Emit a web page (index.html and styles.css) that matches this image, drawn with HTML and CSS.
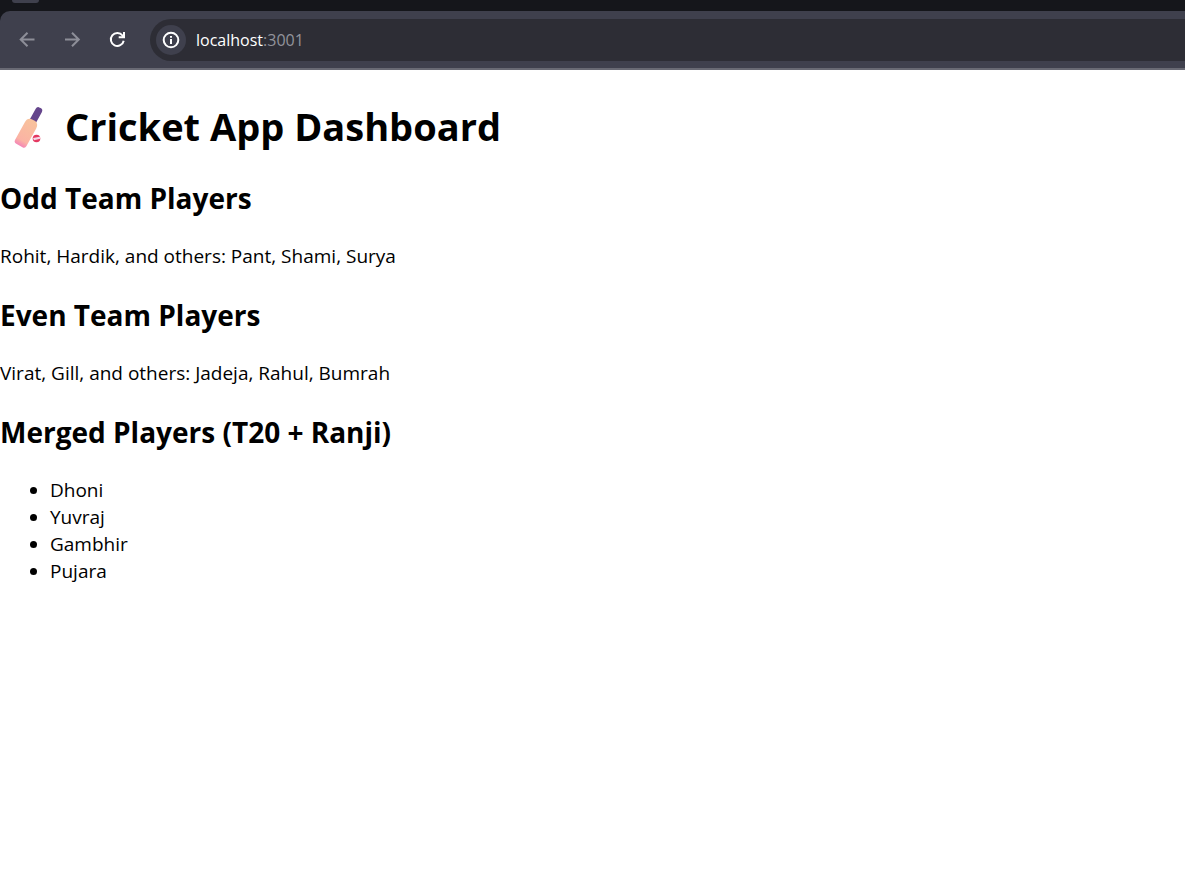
FILE: index.html
```html
<!DOCTYPE html>
<html lang="en">
<head>
  <meta charset="utf-8">
  <title>Cricket App Dashboard</title>
  <link rel="stylesheet" href="styles.css">
</head>
<body>
  <header class="browser">
    <div class="tab-strip"><div class="tab-edge"></div></div>
    <div class="toolbar">
      <nav class="nav-buttons" aria-label="Browser">
        <button class="nav-button nav-button-muted" type="button" aria-label="Back">
          <svg width="16" height="16" viewBox="0 0 16 16"><path d="M15.500 7.500H2M8.500 0.700L1.700 7.500L8.500 14.300"/></svg>
        </button>
        <button class="nav-button nav-button-muted" type="button" aria-label="Forward">
          <svg width="16" height="16" viewBox="0 0 16 16"><path d="M1 7.500H14.500M8 0.700L14.800 7.500L8 14.300"/></svg>
        </button>
        <button class="nav-button" type="button" aria-label="Reload">
          <svg width="16" height="16" viewBox="0 0 16 16"><path d="M14.700 8.700A6.500 6.500 0 1 1 13.500 3.500L14.500 4.700M15 0V5.200H9.700"/></svg>
        </button>
      </nav>
      <div class="address">
        <button class="site-info" type="button" aria-label="Site information">
          <svg width="18" height="18" viewBox="0 0 18 18"><circle cx="9" cy="9" r="7.300"/><path d="M9 8V13M9 5V6.800"/></svg>
        </button>
        <span class="url">localhost<span class="port">:3001</span></span>
      </div>
    </div>
  </header>
  <main class="page">
    <h1 class="title">
      <svg class="bat" width="53" height="53" viewBox="0 0 53 53" role="img" aria-label="Cricket bat and ball">
        <defs>
          <linearGradient id="blade" x1="0" y1="0" x2="0" y2="1">
            <stop offset="0" stop-color="#f8c39c"/>
            <stop offset="0.800" stop-color="#fbb3a4"/>
            <stop offset="1" stop-color="#f486b6"/>
          </linearGradient>
        </defs>
        <g transform="translate(31 24.500) rotate(29)">
          <rect x="-3.500" y="-19" width="7" height="18" rx="3" fill="#65458c"/>
          <path d="M-2 -5H2Q6.500 -4 6.500 1V21Q6.500 24 3.500 24H-3.500Q-6.500 24 -6.500 21V1Q-6.500 -4 -2 -5Z" fill="url(#blade)"/>
        </g>
        <circle cx="36.500" cy="38.500" r="3.800" fill="#e43861"/>
        <path d="M33 38L39.800 36.700L40.200 38.700L34 40.300Z" fill="#f5d6e6"/>
      </svg>
      <span>Cricket App Dashboard</span>
    </h1>
    <h2 class="section-title">Odd Team Players</h2>
    <p class="players">Rohit, Hardik, and others: Pant, Shami, Surya</p>
    <h2 class="section-title">Even Team Players</h2>
    <p class="players">Virat, Gill, and others: Jadeja, Rahul, Bumrah</p>
    <h2 class="section-title">Merged Players (T20 + Ranji)</h2>
    <ul class="player-list">
      <li>Dhoni</li>
      <li>Yuvraj</li>
      <li>Gambhir</li>
      <li>Pujara</li>
    </ul>
  </main>
</body>
</html>
```

FILE: styles.css
```css
body {
  margin: 0;
  background: #fff;
  color: #000;
  font-family: "Open Sans", "Noto Sans", sans-serif;
  font-size: 19px;
  line-height: 27px;
}

.browser {
  background: #15161b;
}

.tab-strip {
  height: 11px;
  padding-left: 12px;
}

.tab-edge {
  width: 27px;
  height: 3px;
  border-radius: 0 0 12px 12px;
  background: #3f404d;
}

.toolbar {
  display: flex;
  align-items: center;
  padding: 8px 0 7px 11px;
  border-bottom: 2px solid #696a74;
  border-top-left-radius: 10px;
  background: #3f404d;
}

.nav-buttons {
  display: flex;
  gap: 13px;
  margin-right: 17px;
}

.nav-button,
.site-info {
  display: grid;
  place-items: center;
  padding: 0;
  border: 0;
  border-radius: 50%;
  background: none;
  color: #fff;
}

.nav-button {
  width: 32px;
  height: 32px;
}

.nav-button-muted {
  color: #8d8e98;
}

.nav-button svg,
.site-info svg {
  overflow: visible;
  fill: none;
  stroke: currentColor;
  stroke-width: 2;
}

.address {
  display: flex;
  flex: 1;
  align-items: center;
  gap: 10px;
  padding: 6px;
  border-radius: 21px 0 0 21px;
  background: #2d2d35;
}

.site-info {
  width: 30px;
  height: 30px;
  background: #3f404d;
}

.url {
  color: #fff;
  font-size: 16px;
}

.port {
  color: #92939b;
}

.page {
  padding-top: 29px;
}

.title {
  display: flex;
  align-items: center;
  gap: 12px;
  margin: 0;
  font-size: 38px;
  line-height: 54px;
}

.section-title {
  margin: 25px 0;
  font-size: 28px;
  line-height: 40px;
}

.players {
  margin: 25px 0;
}

.player-list {
  margin: 0;
  padding-left: 50px;
}
```
